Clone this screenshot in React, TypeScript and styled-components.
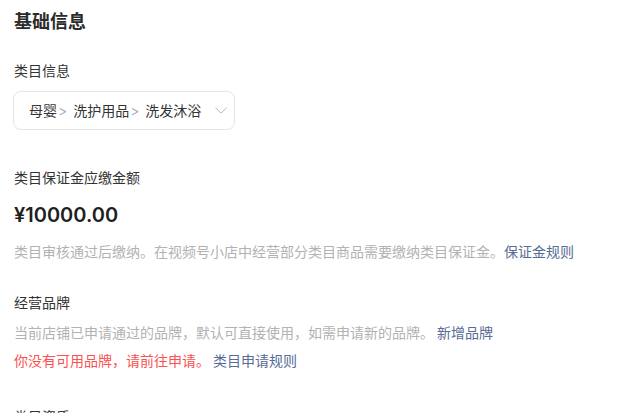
import { ReactElement } from 'react';
import styled, { createGlobalStyle } from 'styled-components';

const GlobalStyle = createGlobalStyle`
  html, body {
    margin: 0;
    padding: 0;
    background: #fff;
  }
  body {
    font-family: 'Inter', 'Noto Sans CJK SC', sans-serif;
    color: #333;
    -webkit-font-smoothing: antialiased;
  }
`;

const categoryPath = ['母婴', '洗护用品', '洗发沐浴'];

const App = (): ReactElement => {
  return (
    <StyledPage>
      <GlobalStyle />
      <StyledTitle>基础信息</StyledTitle>

      <StyledSection $top={26}>
        <StyledLabel>类目信息</StyledLabel>
        <StyledSelect>
          <StyledSelectValue>
            {categoryPath.map((name, i) => (
              <span key={name}>
                {name}
                {i < categoryPath.length - 1 && <StyledSep>&gt;</StyledSep>}
              </span>
            ))}
          </StyledSelectValue>
          <svg width="12" height="7" viewBox="0 0 12 7" fill="none">
            <path d="M0.5 0.8L6 6L11.5 0.8" stroke="#b8b8b8" strokeWidth="1" />
          </svg>
        </StyledSelect>
      </StyledSection>

      <StyledSection $top={38}>
        <StyledLabel>类目保证金应缴金额</StyledLabel>
        <StyledAmount>¥10000.00</StyledAmount>
        <StyledDesc $top={12}>
          类目审核通过后缴纳。在视频号小店中经营部分类目商品需要缴纳类目保证金。
          <StyledLink $gap={0}>保证金规则</StyledLink>
        </StyledDesc>
      </StyledSection>

      <StyledSection $top={31}>
        <StyledLabel>经营品牌</StyledLabel>
        <StyledDesc $top={10}>
          当前店铺已申请通过的品牌，默认可直接使用，如需申请新的品牌。
          <StyledLink $gap={3}>新增品牌</StyledLink>
        </StyledDesc>
        <StyledWarn>
          你没有可用品牌，请前往申请。
          <StyledLink $gap={3}>类目申请规则</StyledLink>
        </StyledWarn>
      </StyledSection>

      <StyledSection $top={36}>
        <StyledLabel>类目资质</StyledLabel>
      </StyledSection>
    </StyledPage>
  );
};

export default App;

const StyledPage = styled.div`
  padding: 9px 14px 40px;
  width: 641px;
  height: 413px;
  box-sizing: border-box;
  overflow: hidden;
`;

const StyledTitle = styled.h1`
  margin: 0;
  font-size: 18px;
  line-height: 26px;
  font-weight: 600;
  color: #2b2b2b;
`;

const StyledSection = styled.section<{ $top: number }>`
  display: flex;
  flex-direction: column;
  align-items: flex-start;
  margin-top: ${(props) => props.$top}px;
`;

const StyledLabel = styled.div`
  font-size: 14px;
  line-height: 20px;
  color: #333;
`;

const StyledSelect = styled.div`
  margin-top: 10px;
  margin-left: -1px;
  width: 222px;
  height: 39px;
  box-sizing: border-box;
  display: flex;
  align-items: center;
  justify-content: space-between;
  padding: 0 7px 0 15px;
  border: 1px solid #e4e4e4;
  border-radius: 8px;
  background: #fff;
`;

const StyledSelectValue = styled.div`
  font-size: 14px;
  line-height: 20px;
  color: #333;
  white-space: nowrap;
`;

const StyledSep = styled.span`
  color: #9a9a9a;
  font-weight: 300;
  margin: 0 6px 0 1px;
`;

const StyledAmount = styled.div`
  margin-top: 12px;
  font-size: 20px;
  line-height: 30px;
  font-weight: 600;
  color: #1f1f1f;
`;

const StyledDesc = styled.div<{ $top: number }>`
  margin-top: ${(props) => props.$top}px;
  font-size: 14px;
  line-height: 20px;
  color: #b2b2b2;
  white-space: nowrap;
`;

const StyledWarn = styled.div`
  margin-top: 8px;
  font-size: 14px;
  line-height: 20px;
  color: #fa5151;
  white-space: nowrap;
`;

const StyledLink = styled.a<{ $gap: number }>`
  margin-left: ${(props) => props.$gap}px;
  color: #576b95;
  cursor: pointer;
`;
